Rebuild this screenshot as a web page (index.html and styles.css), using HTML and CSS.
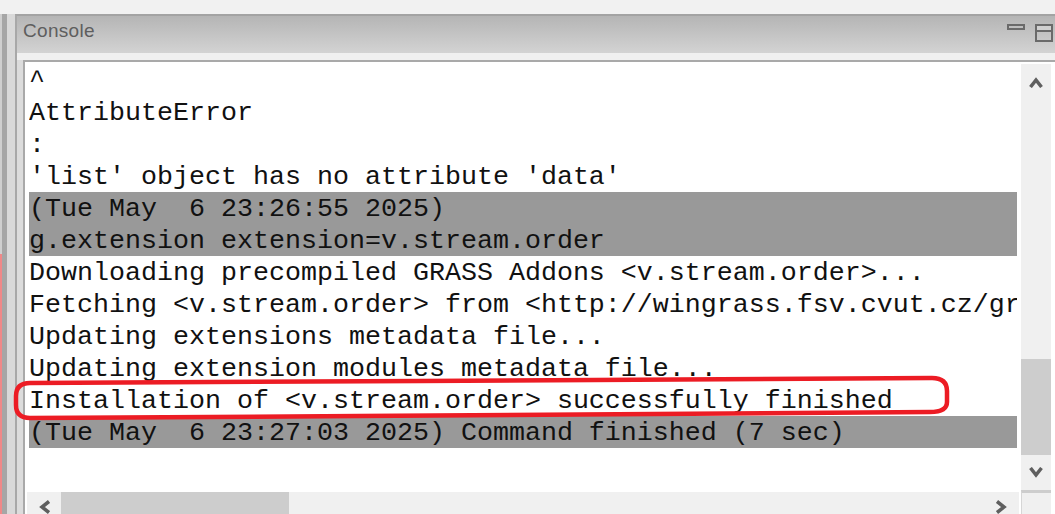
FILE: index.html
```html
<!DOCTYPE html>
<html lang="en">
<head>
    <meta charset="UTF-8">
    <title>Console</title>
    <link rel="stylesheet" href="styles.css">
</head>
<body>

    <div class="top"></div>
    <div class="main">
        <div class="edge">
            <div class="edge-a"></div>
            <div class="edge-b"></div>
            <div class="edge-c"></div>
        </div>
        <div class="panel">
            <div class="head">
                <span class="title">Console</span>
                <span class="btn-min"></span>
                <span class="btn-max"></span>
            </div>
            <div class="gap"></div>
            <div class="body">
                <div class="console">
                    <div class="output">
                        <div class="ln">^</div>
                        <div class="ln">AttributeError</div>
                        <div class="ln">:</div>
                        <div class="ln">'list' object has no attribute 'data'</div>
                        <div class="ln cmd">(Tue May  6 23:26:55 2025)</div>
                        <div class="ln cmd">g.extension extension=v.stream.order</div>
                        <div class="ln">Downloading precompiled GRASS Addons &lt;v.stream.order&gt;...</div>
                        <div class="ln">Fetching &lt;v.stream.order&gt; from &lt;http://wingrass.fsv.cvut.cz/grass84/x86_64/addons/&gt;</div>
                        <div class="ln">Updating extensions metadata file...</div>
                        <div class="ln">Updating extension modules metadata file...</div>
                        <div class="ln">Installation of &lt;v.stream.order&gt; successfully finished</div>
                        <div class="ln cmd">(Tue May  6 23:27:03 2025) Command finished (7 sec)</div>
                    </div>
                    <div class="vscroll">
                        <div class="sbtn">
                            <svg width="14" height="12" viewBox="0 0 14 12"><path d="M1.5 11 L7 4 L12.5 11" /></svg>
                        </div>
                        <div class="vtrack"><div class="vthumb"></div></div>
                        <div class="sbtn">
                            <svg width="14" height="12" viewBox="0 0 14 12"><path d="M1.5 1 L7 8 L12.5 1" /></svg>
                        </div>
                    </div>
                    <div class="hscroll">
                        <div class="sbtn hbtn">
                            <svg width="12" height="14" viewBox="0 0 12 14"><path d="M11 1.5 L4 7 L11 12.5" /></svg>
                        </div>
                        <div class="hthumb"></div>
                        <div class="htrack"></div>
                        <div class="sbtn hbtn">
                            <svg width="12" height="14" viewBox="0 0 12 14"><path d="M1 1.5 L8 7 L1 12.5" /></svg>
                        </div>
                    </div>
                    <div class="corner"></div>
                </div>
            </div>
        </div>
    </div>

    <!-- hand drawn red mark over the success line -->
    <svg class="mark" width="1055" height="514" viewBox="0 0 1055 514">
        <path d="M30 383 L420 381 L932 378 Q947 378 947 391 L947 402 Q947 412 930 412 L360 416 L30 418 Q16 418 16 405 L16 396 Q16 383 30 383 Z" />
    </svg>

</body>
</html>
```

FILE: styles.css
```css
body {
    margin: 0;
    width: 1055px;
    height: 514px;
    overflow: hidden;
    background-color: #f2f2f2;
    position: relative;
    display: flex;
    flex-direction: column;
}
.top {
    height: 14px;
    background-color: #f1f1f1;
}
.main {
    flex: 1;
    display: flex;
    min-height: 0;
}
.edge {
    width: 15px;
    display: flex;
}
.edge-a {
    width: 2px;
    background: linear-gradient(#cfcfcf 0, #cfcfcf 240px, #f08888 240px);
}
.edge-b {
    width: 5px;
    background-color: #a6a6a6;
}
.edge-c {
    width: 8px;
    background-color: #d9d9d9;
}
.panel {
    flex: 1;
    display: flex;
    flex-direction: column;
    border-top: 2px solid #a3a3a3;
    border-left: 2px solid #a8a8a8;
    min-width: 0;
}
.head {
    height: 37px;
    display: flex;
    align-items: flex-start;
    padding: 0 2px 0 6px;
    background: linear-gradient(#b5b5b5, #d3d3d3);
}
.title {
    font-family: "Liberation Sans", Arial, sans-serif;
    font-size: 19px;
    line-height: 22px;
    padding-top: 4px;
    color: #5e5e5e;
    letter-spacing: 0.3px;
}
.btn-min {
    margin-left: auto;
    margin-top: 8px;
    width: 18px;
    height: 6px;
    box-sizing: border-box;
    border: 2px solid #6a6a6a;
}
.btn-max {
    margin-left: 10px;
    margin-top: 8px;
    width: 18px;
    height: 18px;
    box-sizing: border-box;
    border: 2px solid #6a6a6a;
    box-shadow: inset 0 4px 0 #d0d0d0, inset 0 6px 0 #6a6a6a;
}
.gap {
    height: 7px;
    background-color: #f0f0f0;
}
.body {
    flex: 1;
    display: flex;
    padding-left: 6px;
    background-color: #dcdcdc;
    min-height: 0;
}
.console {
    flex: 1;
    background-color: white;
    border-left: 2px solid #a9a9a9;
    border-top: 2px solid #a9a9a9;
    padding: 2px 0 0 2px;
    display: grid;
    grid-template-columns: 992px 30px;
    grid-template-rows: 426px 30px;
    column-gap: 2px;
    row-gap: 2px;
}
.output {
    padding-left: 2px;
    overflow: hidden;
}
.ln {
    width: 988px;
    height: 31px;
    padding-top: 1px;
    line-height: 32px;
    white-space: pre;
    overflow: hidden;
    font-family: "Liberation Mono", "Courier New", monospace;
    font-size: 26.67px;
    color: #111;
}
.ln.cmd {
    background-color: #999999;
}
.vscroll {
    display: flex;
    flex-direction: column;
    background-color: #f0f0f0;
}
.sbtn {
    height: 35px;
    display: flex;
    justify-content: center;
    align-items: center;
    flex-shrink: 0;
}
.sbtn svg path {
    fill: none;
    stroke: #5f5f5f;
    stroke-width: 3.5;
}
.vtrack {
    flex: 1;
    display: flex;
    flex-direction: column;
}
.vthumb {
    margin-top: auto;
    height: 96px;
    background-color: #cdcdcd;
}
.hscroll {
    display: flex;
    background-color: #f0f0f0;
}
.hbtn {
    width: 34px;
    height: 30px;
}
.hthumb {
    width: 228px;
    background-color: #cdcdcd;
}
.htrack {
    flex: 1;
}
.corner {
    background-color: #f0f0f0;
    border-top: 3px solid #cdcdcd;
    border-left: 1px solid #d6d6d6;
    margin-top: -2px;
}
.mark {
    position: absolute;
    left: 0;
    top: 0;
    pointer-events: none;
}
.mark path {
    fill: none;
    stroke: #ec1c24;
    stroke-width: 4.5;
}
```
